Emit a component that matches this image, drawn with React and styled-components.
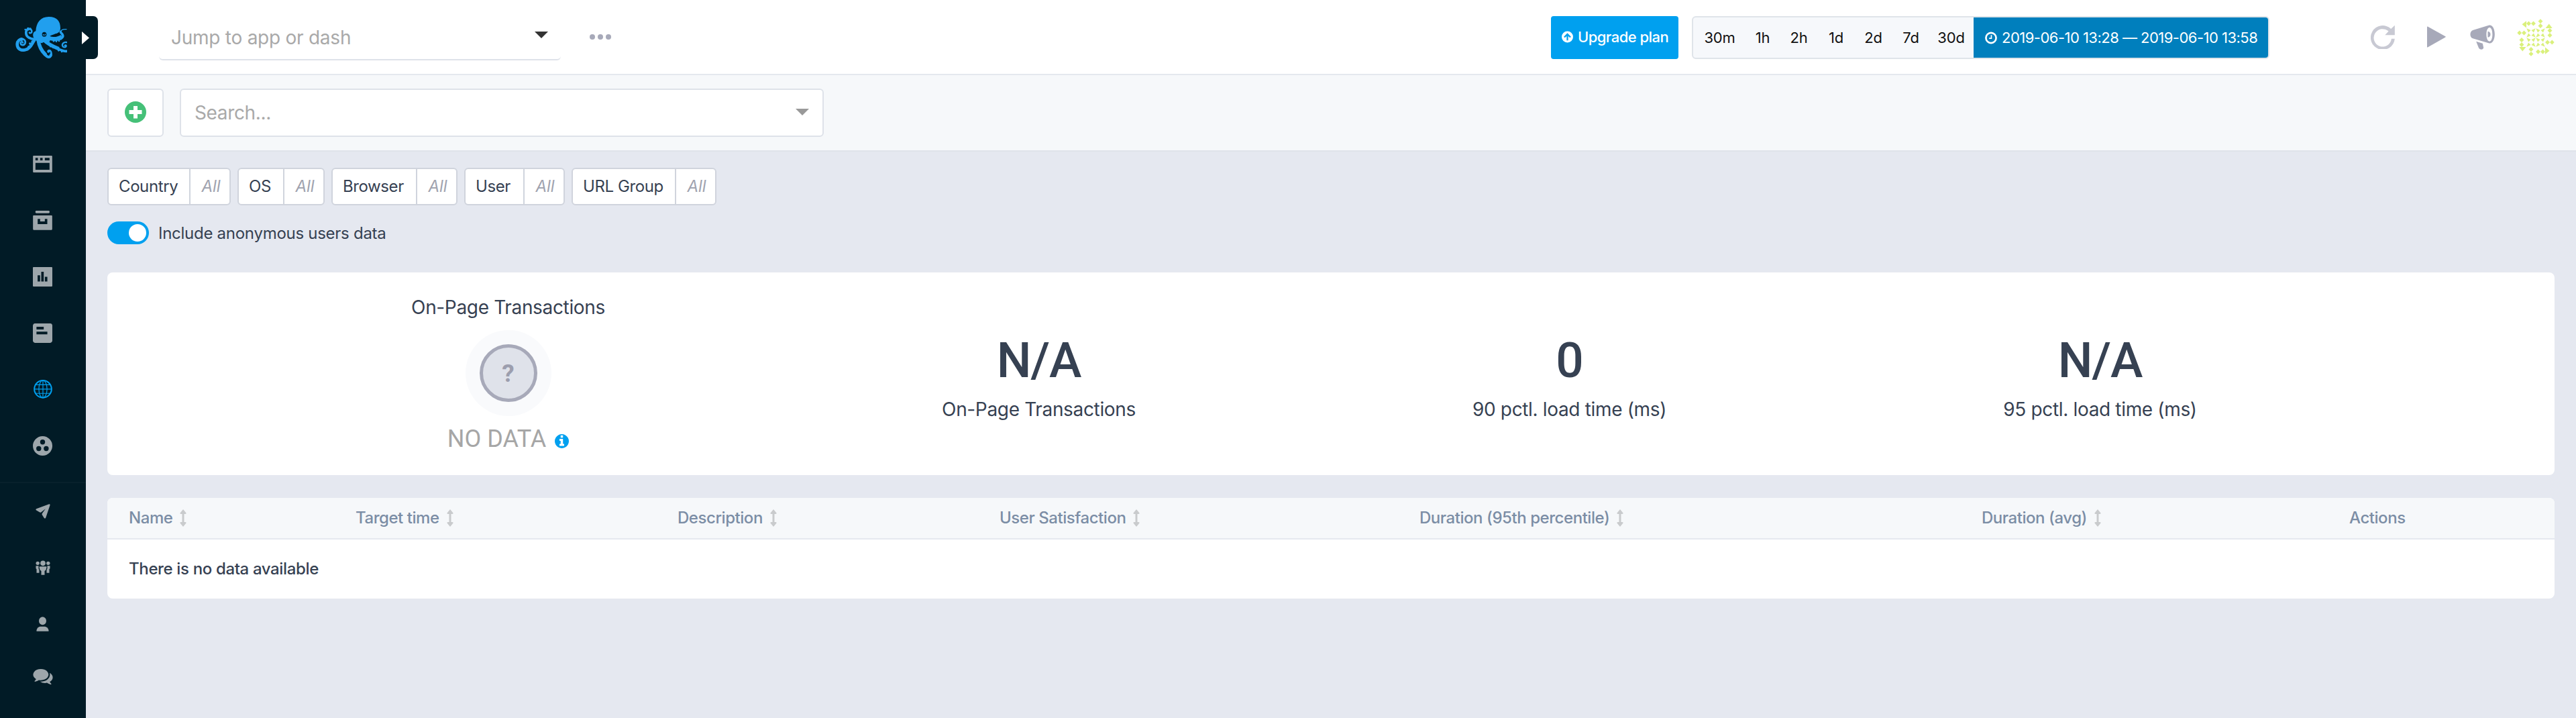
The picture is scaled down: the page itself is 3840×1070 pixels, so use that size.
import React from "react";
import styled, { createGlobalStyle, css } from "styled-components";

const ink = "#364152";
const muted = "#a7a9b9";
const line = "#dee2e9";

const GlobalStyle = createGlobalStyle`
  *, *::before, *::after { box-sizing: border-box; }
  body {
    margin: 0;
    background: #e5e8f0;
    color: ${ink};
    font-family: Inter, "Liberation Sans", sans-serif;
    font-size: 24px;
    line-height: 1;
  }
  svg { display: block; flex: none; }
`;

/* ---------- layout ---------- */
const Page = styled.div`
  display: flex;
  width: 3840px;
  height: 1070px;
  overflow: hidden;
`;
const Sidebar = styled.nav`
  position: relative;
  display: flex;
  flex-direction: column;
  flex: none;
  width: 128px;
  background: #011b26;
  color: #9da6ab;
`;
const LogoBox = styled.div`
  height: 202px;
  padding: 20px 0 0 20px;
`;
const ExpandTab = styled.button`
  position: absolute;
  top: 24px;
  left: 100px;
  display: flex;
  align-items: center;
  width: 46px;
  height: 64px;
  padding: 0 0 0 22px;
  border: 0;
  border-radius: 0 7px 7px 0;
  background: #011b26;
`;
const NavItem = styled.a`
  display: flex;
  align-items: center;
  justify-content: center;
  height: ${(p) => p.$height || 84}px;
  padding-right: 1px;
  color: ${(p) => (p.$active ? "#00a0ef" : "inherit")};
`;
const NavDivider = styled.hr`
  width: 100%;
  height: 2px;
  margin: 12px 0 0;
  border: 0;
  background: #08212c;
`;
const Main = styled.main`
  display: flex;
  flex: 1;
  flex-direction: column;
  min-width: 0;
`;
const Header = styled.header`
  display: flex;
  align-items: center;
  height: 112px;
  padding: 2px 32px 0 109px;
  border-bottom: 2px solid #e4e8ee;
  background: #fff;
`;
const Toolbar = styled.section`
  display: flex;
  gap: 24px;
  height: 114px;
  padding: 20px 32px;
  border-bottom: 2px solid #dfe3ea;
  background: #f6f8fa;
`;
const Content = styled.section`
  display: flex;
  flex-direction: column;
  padding: 24px 32px;
`;

/* ---------- header ---------- */
const CaretSlot = styled.span`
  padding-bottom: ${(p) => p.$lift}px;
`;
const JumpSelect = styled.div`
  display: flex;
  align-items: center;
  justify-content: space-between;
  width: 599px;
  height: 68px;
  padding: 2px 19px 0 18px;
  border-bottom: 2px solid ${line};
  border-radius: 6px;
  color: #a9a9a9;
  font-size: 28px;
  letter-spacing: -0.25px;
`;
const MoreDots = styled.div`
  display: flex;
  gap: 4px;
  margin-left: 43px;
  padding-bottom: 3px;
`;
const Dot = styled.i`
  width: 8px;
  height: 8px;
  border-radius: 50%;
  background: ${muted};
`;
const UpgradeButton = styled.button`
  display: flex;
  align-items: center;
  gap: 7px;
  width: 190px;
  height: 64px;
  margin-left: auto;
  padding: 0 0 3px 16px;
  border: 0;
  border-radius: 4px;
  background: #00a0ef;
  color: #fff;
  font: 500 22px Inter, sans-serif;
  letter-spacing: -0.55px;
  white-space: nowrap;
`;
const TimeGroup = styled.div`
  display: flex;
  width: 861px;
  height: 64px;
  margin-left: 20px;
  border: 2px solid #dfe4e9;
  border-radius: 6px;
  background: #f6f8fb;
  color: #111;
  font-size: 22px;
  letter-spacing: -0.2px;
  overflow: hidden;
`;
const Preset = styled.span`
  display: flex;
  flex: none;
  align-items: center;
  justify-content: center;
  width: ${(p) => p.$width}px;
`;
const TimeRange = styled.span`
  display: flex;
  align-items: center;
  gap: 7px;
  flex: 1;
  padding-left: 17px;
  background: #007fbd;
  color: #fff;
  letter-spacing: -0.52px;
  white-space: nowrap;
`;
const HeaderIcons = styled.div`
  display: flex;
  align-items: center;
  width: 274px;
  margin-left: 151px;
  color: ${muted};
`;
const IconSlot = styled.span`
  margin-right: ${(p) => p.$gap || 0}px;
  padding-bottom: 2px;
  opacity: ${(p) => p.$opacity || 1};
`;

/* ---------- toolbar ---------- */
const box = css`
  display: flex;
  align-items: center;
  height: 72px;
  border: 2px solid ${line};
  border-radius: 6px;
  background: #fff;
`;
const AddButton = styled.button`
  ${box}
  justify-content: center;
  width: 84px;
  padding: 0 0 2px;
`;
const SearchSelect = styled.div`
  ${box}
  justify-content: space-between;
  width: 960px;
  padding: 0 20px;
  color: #a9a9a9;
  font-size: 28px;
  letter-spacing: -0.35px;
`;

/* ---------- filters ---------- */
const Filters = styled.div`
  display: flex;
  gap: 10px;
`;
const Filter = styled.div`
  display: flex;
  width: ${(p) => p.$width}px;
  height: 56px;
  border: 2px solid #d0d4dd;
  border-radius: 6px;
  background: #fff;
`;
const FilterName = styled.span`
  display: flex;
  flex: 1;
  align-items: center;
  padding-left: 15px;
  letter-spacing: -0.4px;
  white-space: nowrap;
`;
const FilterValue = styled.span`
  display: flex;
  align-items: center;
  justify-content: center;
  width: 60px;
  padding-left: 3px;
  border-left: 2px solid #d0d4dd;
  color: #a0a3af;
  font-style: italic;
`;
const SwitchRow = styled.label`
  display: flex;
  align-items: center;
  gap: 14px;
  margin-top: 24px;
`;
const SwitchText = styled.span`
  padding-top: 2px;
  letter-spacing: -0.27px;
`;
const Switch = styled.span`
  display: flex;
  justify-content: flex-end;
  width: 62px;
  height: 34px;
  padding: 4px;
  border-radius: 17px;
  background: #00a0ef;
`;
const Knob = styled.span`
  width: 26px;
  height: 26px;
  border-radius: 50%;
  background: #fff;
`;

/* ---------- summary card ---------- */
const Summary = styled.section`
  display: grid;
  grid-template-columns: repeat(4, 791px);
  height: 302px;
  margin-top: 42px;
  padding-left: 202px;
  border-radius: 8px;
  background: #fff;
`;
const Metric = styled.div`
  display: flex;
  flex-direction: column;
  align-items: center;
  padding-top: ${(p) => p.$top}px;
`;
const MetricLabel = styled.span`
  color: ${ink};
  font-size: 28px;
  line-height: 34px;
  letter-spacing: -0.34px;
`;
const MetricValue = styled.span`
  margin-bottom: 12px;
  font: 500 73px/88px Roboto, sans-serif;
  letter-spacing: -1px;
`;
const Halo = styled.div`
  display: flex;
  align-items: center;
  justify-content: center;
  width: 128px;
  height: 128px;
  margin-top: 17px;
  border-radius: 50%;
  background: #f9fafc;
`;
const StatusCircle = styled.div`
  display: flex;
  align-items: center;
  justify-content: center;
  width: 86px;
  height: 86px;
  border: 5px solid ${muted};
  border-radius: 50%;
  background: #dfe2ea;
  color: #9c9eae;
  font: 700 37px Roboto, sans-serif;
`;
const StatusText = styled.div`
  display: flex;
  align-items: center;
  gap: 13px;
  margin-top: 12px;
  color: #a6a6a6;
  font: 400 36px/44px Roboto, sans-serif;
`;
const InfoSlot = styled.span`
  padding-top: 6px;
`;

/* ---------- table ---------- */
const Table = styled.section`
  margin-top: 34px;
  border-radius: 8px;
  background: #fff;
  overflow: hidden;
`;
const TableHead = styled.div`
  display: grid;
  grid-template-columns: 338px 480px 480px 626px 838px 548px 1fr;
  align-items: center;
  height: 62px;
  padding-left: 32px;
  border-bottom: 2px solid #e5e8ef;
  background: #f6f8fa;
  color: #7b8da5;
  font-weight: 500;
  letter-spacing: -0.45px;
`;
const HeadCell = styled.span`
  display: flex;
  align-items: center;
  gap: 11px;
  white-space: nowrap;
`;
const EmptyRow = styled.div`
  display: flex;
  align-items: center;
  height: 88px;
  padding-left: 32px;
  font-weight: 500;
  letter-spacing: -0.36px;
`;

/* ---------- drawings ---------- */
const Svg = ({ box: b, w, h, children, fill = "currentColor" }) => (
  <svg viewBox={b} width={w} height={h} fill={fill}>{children}</svg>
);

const Octopus = () => (
  <Svg box="60 60 270 210" w={90} h={70} fill="#219fee">
    <path d="M160 139C162 101 181 75 218 75C256 75 270 97 270 125C270 139 262 148 248 151C239 156 230 157 223 161C240 169 256 165 273 156L276 164C266 176 242 180 222 176C228 187 216 192 204 184L187 193C170 190 160 180 153 172C145 164 145 142 160 139Z" />
    <g fill="none" stroke="#219fee" strokeLinecap="round" strokeLinejoin="round">
      <path strokeWidth="11" d="M154 175C136 175 119 165 117 152C114 136 122 130 130 130" />
      <path strokeWidth="8" d="M126 129C138 127 145 137 141 145C138 148 134 149 132 146" />
      <path strokeWidth="14" d="M155 178C143 192 139 214 118 221C95 230 77 218 77 197C78 182 89 176 97 176" />
      <path strokeWidth="8" d="M94 173C107 172 117 183 112 195C106 205 91 202 92 191C94 186 100 185 102 190" />
      <path strokeWidth="16" d="M171 179C174 202 184 226 202 243" />
      <path strokeWidth="12" d="M200 241C212 259 224 259 228 245" />
      <path strokeWidth="8" d="M228 250C233 237 227 222 217 226C212 229 215 234 219 231" />
      <path strokeWidth="16" d="M196 178C211 194 236 207 258 216" />
      <path strokeWidth="11" d="M250 214C273 225 294 234 307 226C316 220 314 203 309 197" />
      <path strokeWidth="7" d="M313 208C312 190 296 185 285 191C274 199 279 213 291 211C299 208 296 199 290 203" />
      <path strokeWidth="11" d="M215 172C238 181 274 181 281 164C284 151 270 149 271 142" />
      <path strokeWidth="4" d="M270 144C272 133 284 130 297 131" />
    </g>
    <g>
      <circle cx="113" cy="132" r="4" /><circle cx="125" cy="126" r="4" /><circle cx="136" cy="127" r="3.500" />
      <circle cx="144" cy="186" r="5" /><circle cx="134" cy="195" r="5" /><circle cx="128" cy="209" r="5" />
      <circle cx="180" cy="214" r="5" /><circle cx="188" cy="230" r="4.500" />
      <circle cx="240" cy="183" r="4.500" /><circle cx="252" cy="185" r="4" /><circle cx="264" cy="183" r="4" />
      <circle cx="226" cy="207" r="4.500" /><circle cx="238" cy="213" r="4" /><circle cx="262" cy="226" r="4" />
      <circle cx="276" cy="231" r="4" /><circle cx="317" cy="213" r="3" />
    </g>
    <ellipse cx="198" cy="154" rx="10" ry="10.500" fill="#011b26" />
    <path d="M191 152L198 154L205 151L204 157C201 161 195 161 192 157Z" />
    <ellipse cx="198" cy="156" rx="3" ry="2" fill="#011b26" />
  </Svg>
);

const Caret = ({ color, lift }) => (
  <CaretSlot $lift={lift}>
    <Svg box="0 0 20 10" w={20} h={10} fill={color}><path d="M0 0H20L10 10Z" /></Svg>
  </CaretSlot>
);

const PlusCircle = () => (
  <Svg box="0 0 32 32" w={32} h={32}>
    <circle cx="16" cy="16" r="16" fill="#45c078" />
    <path d="M13 7h6v6h6.500v6H19v6.500h-6V19H6.500v-6H13Z" fill="#fff" />
  </Svg>
);

const UpCircle = () => (
  <Svg box="0 0 18 18" w={17} h={18}>
    <path fillRule="evenodd" d="M9 0a9 9 0 1 1 0 18A9 9 0 0 1 9 0ZM9 3L3.300 8.700L5 10.300L7.800 7.700V14.500H10.200V7.700L13 10.300L14.700 8.700Z" />
  </Svg>
);

const Clock = () => (
  <Svg box="0 0 19 19" w={18} h={19} fill="none">
    <circle cx="9.500" cy="9.500" r="8" stroke="currentColor" strokeWidth="2.800" />
    <path d="M10 5V10.200H6.500" stroke="currentColor" strokeWidth="1.800" />
  </Svg>
);

const WindowIcon = () => (
  <Svg box="148 96 86 75" w={29} h={25}>
    <path fillRule="evenodd" d="M151 96H231Q234 96 234 99V168Q234 171 231 171H151Q148 171 148 168V99Q148 96 151 96ZM159 106V117H170V106ZM180 106V117H191V106ZM201 106V117H222V106ZM159 128V159H222V128Z" />
  </Svg>
);
const ArchiveIcon = () => (
  <Svg box="148 342 86 87" w={29} h={29}>
    <rect x="159" y="342" width="63" height="11" rx="4" />
    <path fillRule="evenodd" d="M151 363H231Q234 363 234 366V424Q234 428 231 428H151Q148 428 148 424V366Q148 363 151 363ZM169 379V402H212V379H201V390H180V379Z" />
  </Svg>
);
const ChartIcon = () => (
  <Svg box="148 594 86 86" w={29} h={29}>
    <path fillRule="evenodd" d="M151 594H231Q234 594 234 597V677Q234 680 231 680H151Q148 680 148 677V597Q148 594 151 594ZM169 630V658H180V630ZM185 615V658H196V615ZM201 637V658H212V637Z" />
  </Svg>
);
const NoteIcon = () => (
  <Svg box="148 846 86 86" w={29} h={29}>
    <path fillRule="evenodd" d="M157 846H225Q234 847 234 856V922Q233 931 225 932H157Q149 931 148 922V856Q149 847 157 846ZM164 861V873H196V861ZM164 882V894H212V882Z" />
  </Svg>
);
const GlobeIcon = () => (
  <Svg box="149 1100 83 83" w={28} h={28} fill="none">
    <g stroke="currentColor" strokeWidth="3.500">
      <circle cx="190.500" cy="1141" r="38" strokeWidth="6" />
      <ellipse cx="190.500" cy="1141" rx="18" ry="38" />
      <path d="M190.500 1103V1179M152 1141H229M158 1122H223M158 1160H223" />
    </g>
  </Svg>
);
const ClusterIcon = () => (
  <Svg box="148 1350 86 86" w={29} h={29}>
    <path fillRule="evenodd" d="M191 1350a43 43 0 1 1 0 86a43 43 0 0 1 0-86ZM191 1365a11 11 0 1 0 0 22a11 11 0 0 0 0-22ZM174 1394a11 11 0 1 0 0 22a11 11 0 0 0 0-22ZM207 1394a11 11 0 1 0 0 22a11 11 0 0 0 0-22Z" />
  </Svg>
);
const PlaneIcon = () => (
  <Svg box="158 184 65 66" w={22} h={22}>
    <path d="M218 185Q223 184 222 190L203 246Q200 251 196 247L186 231Q186 227 190 222L202 206L181 222Q178 223 174 220L160 212Q157 208 161 206Z" />
  </Svg>
);
const TeamIcon = () => (
  <Svg box="158 436 65 66" w={22} h={22}>
    <circle cx="190.500" cy="449" r="11.500" /><circle cx="167" cy="449" r="8" /><circle cx="214" cy="449" r="8" />
    <path d="M177 464H205Q207 464 207 467L204 479L198 484V501H183V484L177 479L174 467Q174 464 177 464Z" />
    <path d="M159 461H171V472L174 481V492H162V475L159 473ZM222 461H210V472L207 481V492H219V475L222 473Z" />
  </Svg>
);
const UserIcon = () => (
  <Svg box="164 688 56 66" w={19} h={22}>
    <ellipse cx="192" cy="707" rx="16.500" ry="18" />
    <path d="M165 753V748Q168 735 180 732H203Q216 735 219 748V753Z" />
  </Svg>
);
const ChatIcon = () => (
  <Svg box="0 256 1792 1410" w={30} h={23}>
    <path d="M1408 768q0 139-94 257t-256.500 186.500-353.500 68.500q-86 0-176-16-124 88-278 128-36 9-86 16h-3q-11 0-20.500-8t-11.500-21q-1-3-1-6.500t.5-6.500 2-6l2.500-5 3.500-5.500 4-5 4.500-5 4-4.500q5-6 23-25t26-29.500 22.500-29 25-38.500 20.500-44q-124-72-195-177t-71-224q0-139 94-257t256.500-186.500 353.500-68.500 353.500 68.500 256.500 186.500 94 257zm384 256q0 120-71 224.500t-195 176.500q10 24 20.500 44t25 38.500 22.500 29 26 29.500 23 25q1 1 4 4.500t4.500 5 4 5 3.500 5.500l2.500 5 2 6 .5 6.500-1 6.500q-3 14-13 22t-22 7q-50-7-86-16-154-40-278-128-90 16-176 16-271 0-472-132 58 4 88 4 161 0 309-45t264-129q125-92 192-212t67-254q0-77-23-152 129 71 204 178t75 230z" />
  </Svg>
);
const InfoIcon = () => (
  <Svg box="128 128 1536 1536" w={21} h={21} fill="#00a0ef">
    <path d="M1152 1376v-160q0-14-9-23t-23-9h-96v-512q0-14-9-23t-23-9h-320q-14 0-23 9t-9 23v160q0 14 9 23t23 9h96v320h-96q-14 0-23 9t-9 23v160q0 14 9 23t23 9h448q14 0 23-9t9-23zm-128-896v-192q0-14-9-23t-23-9h-192q-14 0-23 9t-9 23v192q0 14 9 23t23 9h192q14 0 23-9t9-23zm640 416q0 209-103 385.500t-279.500 279.500-385.500 103-385.500-103-279.500-279.500-103-385.500 103-385.500 279.500-279.500 385.500-103 385.500 103 279.500 279.500 103 385.500z" />
  </Svg>
);
const RefreshIcon = () => (
  <Svg box="162 111 108 109" w={36} h={36}>
    <path d="M270 113V157H226L242 140A40 40 0 1 0 255 174H270A54.500 54.500 0 1 1 253 129Z" />
  </Svg>
);
const PlayIcon = () => (
  <Svg box="414 117 85 97" w={28} h={32}><path d="M414 121Q414 117 418 119L497 163Q500 165 497 167L418 212Q414 214 414 210Z" /></Svg>
);
const MegaphoneIcon = () => (
  <Svg box="605 110 110 111" w={37} h={37}>
    <path fillRule="evenodd" d="M688 112C724 103 724 202 688 192L617 171C602 166 602 139 617 134ZM692 122C673 122 673 184 692 184C709 184 709 122 692 122Z" />
    <path d="M684 139C700 139 700 166 684 166Z" />
    <path d="M632 184L661 193L665 212C665 221 648 224 643 212Z" />
  </Svg>
);
const SortIcon = () => (
  <Svg box="0 0 10 26" w={10} h={26} fill="#c9cbcd">
    <path d="M5 0L9.500 5.500Q10 7 8 7H6.500V19H8Q10 19 9.500 20.500L5 26L.5 20.500Q0 19 2 19H3.500V7H2Q0 7 .5 5.500Z" />
  </Svg>
);

const quarterTurns = [0, 90, 180, 270];
const Identicon = () => (
  <Svg box="0 0 56 56" w={56} h={56} fill="#daf07c">
    {quarterTurns.map((angle) => (
      <g key={angle} transform={`rotate(${angle} 28 28)`}>
        <path d="M14 3.300V13.500L7.500 8.200Z" />
        <path d="M14 7L17.500 3.500L21 7L24.500 3.500L28 7L24.500 10.500L21 7L17.500 10.500Z" />
        <path d="M35 0.300L38.500 3.700L35 7L38.500 10.500L35 14L31.500 10.500L35 7L31.500 3.700Z" />
        {quarterTurns.map((turn) => (
          <path key={turn} transform={`rotate(${turn} 21 21)`} d="M14.300 14.300L20.500 17L17 20.500Z" />
        ))}
      </g>
    ))}
  </Svg>
);

/* ---------- data ---------- */
const primaryNav = [
  { id: "apps", Icon: WindowIcon },
  { id: "archive", Icon: ArchiveIcon },
  { id: "reports", Icon: ChartIcon },
  { id: "logs", Icon: NoteIcon },
  { id: "rum", Icon: GlobeIcon, active: true },
  { id: "cluster", Icon: ClusterIcon },
];
const secondaryNav = [
  { id: "invite", Icon: PlaneIcon },
  { id: "team", Icon: TeamIcon },
  { id: "account", Icon: UserIcon },
  { id: "chat", Icon: ChatIcon, height: 73 },
];
const presets = [
  ["30m", 79], ["1h", 49], ["2h", 59], ["1d", 52], ["2d", 59], ["7d", 53], ["30d", 67],
];
const filters = [
  ["Country", 184], ["OS", 130], ["Browser", 188], ["User", 150], ["URL Group", 216],
];
const metrics = [
  ["N/A", "On-Page Transactions"],
  ["0", "90 pctl. load time (ms)"],
  ["N/A", "95 pctl. load time (ms)"],
];
const columns = [
  "Name", "Target time", "Description", "User Satisfaction",
  "Duration (95th percentile)", "Duration (avg)", "Actions",
];

export default function App() {
  return (
    <Page>
      <GlobalStyle />
      <Sidebar>
        <ExpandTab>
          <Svg box="0 0 11 19" w={11} h={19} fill="#fff"><path d="M0 0L11 9.500L0 19Z" /></Svg>
        </ExpandTab>
        <LogoBox><Octopus /></LogoBox>
        {primaryNav.map(({ id, Icon, active }) => (
          <NavItem key={id} $active={active}><Icon /></NavItem>
        ))}
        <NavDivider />
        {secondaryNav.map(({ id, Icon, height }) => (
          <NavItem key={id} $height={height}><Icon /></NavItem>
        ))}
      </Sidebar>

      <Main>
        <Header>
          <JumpSelect>Jump to app or dash<Caret color="#333" lift={8} /></JumpSelect>
          <MoreDots><Dot /><Dot /><Dot /></MoreDots>
          <UpgradeButton><UpCircle />Upgrade plan</UpgradeButton>
          <TimeGroup>
            {presets.map(([label, width]) => <Preset key={label} $width={width}>{label}</Preset>)}
            <TimeRange><Clock />2019-06-10 13:28 — 2019-06-10 13:58</TimeRange>
          </TimeGroup>
          <HeaderIcons>
            <IconSlot $gap={48} $opacity={0.62}><RefreshIcon /></IconSlot>
            <IconSlot $gap={36}><PlayIcon /></IconSlot>
            <IconSlot $gap={33}><MegaphoneIcon /></IconSlot>
            <Identicon />
          </HeaderIcons>
        </Header>

        <Toolbar>
          <AddButton><PlusCircle /></AddButton>
          <SearchSelect>Search...<Caret color="#999" lift={2} /></SearchSelect>
        </Toolbar>

        <Content>
          <Filters>
            {filters.map(([name, width]) => (
              <Filter key={name} $width={width}>
                <FilterName>{name}</FilterName>
                <FilterValue>All</FilterValue>
              </Filter>
            ))}
          </Filters>
          <SwitchRow>
            <Switch><Knob /></Switch>
            <SwitchText>Include anonymous users data</SwitchText>
          </SwitchRow>

          <Summary>
            <Metric $top={35}>
              <MetricLabel>On-Page Transactions</MetricLabel>
              <Halo><StatusCircle>?</StatusCircle></Halo>
              <StatusText>NO DATA<InfoSlot><InfoIcon /></InfoSlot></StatusText>
            </Metric>
            {metrics.map(([value, label]) => (
              <Metric key={label} $top={87}>
                <MetricValue>{value}</MetricValue>
                <MetricLabel>{label}</MetricLabel>
              </Metric>
            ))}
          </Summary>

          <Table>
            <TableHead>
              {columns.map((name) => (
                <HeadCell key={name}>{name}{name !== "Actions" && <SortIcon />}</HeadCell>
              ))}
            </TableHead>
            <EmptyRow>There is no data available</EmptyRow>
          </Table>
        </Content>
      </Main>
    </Page>
  );
}
